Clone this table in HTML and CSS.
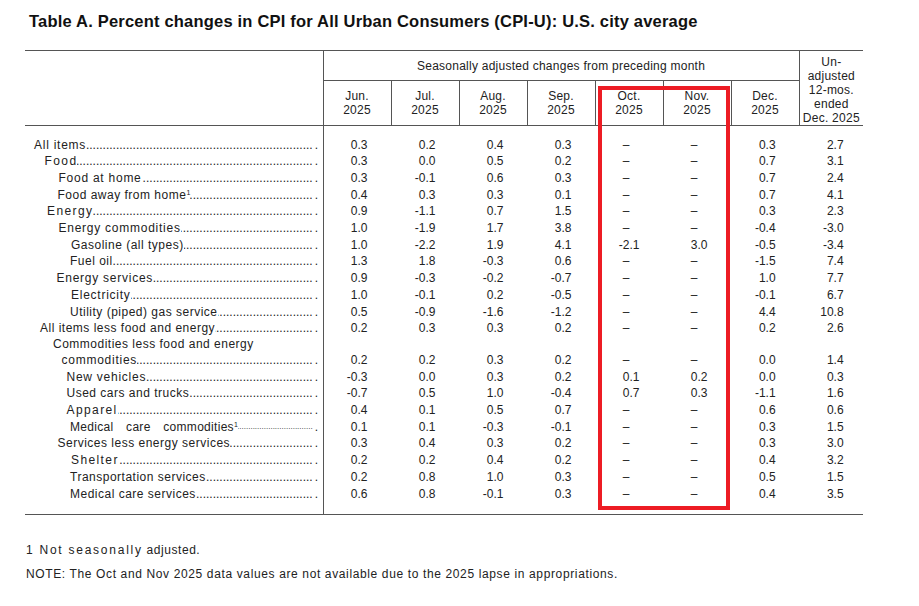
FILE: index.html
```html
<!DOCTYPE html>
<html lang="en">
<head>
<meta charset="utf-8">
<title>Table A. Percent changes in CPI</title>
<link rel="stylesheet" href="styles.css">
</head>
<body>
<div class="page">
  <h1 class="title">Table A. Percent changes in CPI for All Urban Consumers (CPI-U): U.S. city average</h1>
  <table class="cpi">
    <colgroup>
      <col class="c-label">
      <col class="c-m"><col class="c-m"><col class="c-m"><col class="c-m"><col class="c-m"><col class="c-m"><col class="c-m">
      <col class="c-u">
    </colgroup>
    <thead>
      <tr class="h1">
        <th class="blank" rowspan="2"></th>
        <th class="grp" colspan="7">Seasonally adjusted changes from preceding month</th>
        <th class="unadj" rowspan="2">Un-<br>adjusted<br>12-mos.<br>ended<br>Dec. 2025</th>
      </tr>
      <tr class="h2">
        <th class="m">Jun.<br>2025</th>
        <th class="m">Jul.<br>2025</th>
        <th class="m">Aug.<br>2025</th>
        <th class="m">Sep.<br>2025</th>
        <th class="m">Oct.<br>2025</th>
        <th class="m">Nov.<br>2025</th>
        <th class="m">Dec.<br>2025</th>
      </tr>
    </thead>
    <tbody>
      <tr class="first">
        <td class="lbl"><div class="lead ind-9 wide"><span class="t">All items</span><span class="dots"></span><span class="end">.</span></div></td>
        <td class="num">0.3</td><td class="num">0.2</td><td class="num">0.4</td><td class="num">0.3</td><td class="num"><span class="na">–</span></td><td class="num"><span class="na">–</span></td><td class="num">0.3</td><td class="num last">2.7</td>
      </tr>
      <tr>
        <td class="lbl"><div class="lead ind-20 wider"><span class="t">Food</span><span class="dots"></span><span class="end">.</span></div></td>
        <td class="num">0.3</td><td class="num">0.0</td><td class="num">0.5</td><td class="num">0.2</td><td class="num"><span class="na">–</span></td><td class="num"><span class="na">–</span></td><td class="num">0.7</td><td class="num last">3.1</td>
      </tr>
      <tr>
        <td class="lbl"><div class="lead ind-33 wide"><span class="t">Food at home</span><span class="dots"></span><span class="end">.</span></div></td>
        <td class="num">0.3</td><td class="num">-0.1</td><td class="num">0.6</td><td class="num">0.3</td><td class="num"><span class="na">–</span></td><td class="num"><span class="na">–</span></td><td class="num">0.7</td><td class="num last">2.4</td>
      </tr>
      <tr>
        <td class="lbl"><div class="lead ind-32"><span class="t">Food away from home<sup>1</sup></span><span class="dots"></span><span class="end">.</span></div></td>
        <td class="num">0.4</td><td class="num">0.3</td><td class="num">0.3</td><td class="num">0.1</td><td class="num"><span class="na">–</span></td><td class="num"><span class="na">–</span></td><td class="num">0.7</td><td class="num last">4.1</td>
      </tr>
      <tr>
        <td class="lbl"><div class="lead ind-22 wider"><span class="t">Energy</span><span class="dots"></span><span class="end">.</span></div></td>
        <td class="num">0.9</td><td class="num">-1.1</td><td class="num">0.7</td><td class="num">1.5</td><td class="num"><span class="na">–</span></td><td class="num"><span class="na">–</span></td><td class="num">0.3</td><td class="num last">2.3</td>
      </tr>
      <tr>
        <td class="lbl"><div class="lead ind-33 wide"><span class="t">Energy commodities</span><span class="dots"></span><span class="end">.</span></div></td>
        <td class="num">1.0</td><td class="num">-1.9</td><td class="num">1.7</td><td class="num">3.8</td><td class="num"><span class="na">–</span></td><td class="num"><span class="na">–</span></td><td class="num">-0.4</td><td class="num last">-3.0</td>
      </tr>
      <tr>
        <td class="lbl"><div class="lead ind-46"><span class="t">Gasoline (all types)</span><span class="dots"></span><span class="end">.</span></div></td>
        <td class="num">1.0</td><td class="num">-2.2</td><td class="num">1.9</td><td class="num">4.1</td><td class="num">-2.1</td><td class="num">3.0</td><td class="num">-0.5</td><td class="num last">-3.4</td>
      </tr>
      <tr>
        <td class="lbl"><div class="lead ind-45"><span class="t">Fuel oil</span><span class="dots"></span><span class="end">.</span></div></td>
        <td class="num">1.3</td><td class="num">1.8</td><td class="num">-0.3</td><td class="num">0.6</td><td class="num"><span class="na">–</span></td><td class="num"><span class="na">–</span></td><td class="num">-1.5</td><td class="num last">7.4</td>
      </tr>
      <tr>
        <td class="lbl"><div class="lead ind-31 wide"><span class="t">Energy services</span><span class="dots"></span><span class="end">.</span></div></td>
        <td class="num">0.9</td><td class="num">-0.3</td><td class="num">-0.2</td><td class="num">-0.7</td><td class="num"><span class="na">–</span></td><td class="num"><span class="na">–</span></td><td class="num">1.0</td><td class="num last">7.7</td>
      </tr>
      <tr>
        <td class="lbl"><div class="lead ind-46 wide"><span class="t">Electricity</span><span class="dots"></span><span class="end">.</span></div></td>
        <td class="num">1.0</td><td class="num">-0.1</td><td class="num">0.2</td><td class="num">-0.5</td><td class="num"><span class="na">–</span></td><td class="num"><span class="na">–</span></td><td class="num">-0.1</td><td class="num last">6.7</td>
      </tr>
      <tr>
        <td class="lbl"><div class="lead ind-45"><span class="t">Utility (piped) gas service</span><span class="dots"></span><span class="end">.</span></div></td>
        <td class="num">0.5</td><td class="num">-0.9</td><td class="num">-1.6</td><td class="num">-1.2</td><td class="num"><span class="na">–</span></td><td class="num"><span class="na">–</span></td><td class="num">4.4</td><td class="num last">10.8</td>
      </tr>
      <tr>
        <td class="lbl"><div class="lead ind-15"><span class="t">All items less food and energy</span><span class="dots"></span><span class="end">.</span></div></td>
        <td class="num">0.2</td><td class="num">0.3</td><td class="num">0.3</td><td class="num">0.2</td><td class="num"><span class="na">–</span></td><td class="num"><span class="na">–</span></td><td class="num">0.2</td><td class="num last">2.6</td>
      </tr>
      <tr>
        <td class="lbl">
          <div class="lead ind-28 upper"><span class="t">Commodities less food and energy</span></div>
          <div class="lead ind-36 wide"><span class="t">commodities</span><span class="dots"></span><span class="end">.</span></div>
        </td>
        <td class="num">0.2</td><td class="num">0.2</td><td class="num">0.3</td><td class="num">0.2</td><td class="num"><span class="na">–</span></td><td class="num"><span class="na">–</span></td><td class="num">0.0</td><td class="num last">1.4</td>
      </tr>
      <tr>
        <td class="lbl"><div class="lead ind-41 wide"><span class="t">New vehicles</span><span class="dots"></span><span class="end">.</span></div></td>
        <td class="num">-0.3</td><td class="num">0.0</td><td class="num">0.3</td><td class="num">0.2</td><td class="num">0.1</td><td class="num">0.2</td><td class="num">0.0</td><td class="num last">0.3</td>
      </tr>
      <tr>
        <td class="lbl"><div class="lead ind-41"><span class="t">Used cars and trucks</span><span class="dots"></span><span class="end">.</span></div></td>
        <td class="num">-0.7</td><td class="num">0.5</td><td class="num">1.0</td><td class="num">-0.4</td><td class="num">0.7</td><td class="num">0.3</td><td class="num">-1.1</td><td class="num last">1.6</td>
      </tr>
      <tr>
        <td class="lbl"><div class="lead ind-41 wider"><span class="t">Apparel</span><span class="dots"></span><span class="end">.</span></div></td>
        <td class="num">0.4</td><td class="num">0.1</td><td class="num">0.5</td><td class="num">0.7</td><td class="num"><span class="na">–</span></td><td class="num"><span class="na">–</span></td><td class="num">0.6</td><td class="num last">0.6</td>
      </tr>
      <tr>
        <td class="lbl"><div class="lead ind-45 gappy"><span class="t">Medical care commodities<sup>1</sup></span><span class="dots small"></span><span class="end">.</span></div></td>
        <td class="num">0.1</td><td class="num">0.1</td><td class="num">-0.3</td><td class="num">-0.1</td><td class="num"><span class="na">–</span></td><td class="num"><span class="na">–</span></td><td class="num">0.3</td><td class="num last">1.5</td>
      </tr>
      <tr>
        <td class="lbl"><div class="lead ind-32"><span class="t">Services less energy services</span><span class="dots"></span><span class="end">.</span></div></td>
        <td class="num">0.3</td><td class="num">0.4</td><td class="num">0.3</td><td class="num">0.2</td><td class="num"><span class="na">–</span></td><td class="num"><span class="na">–</span></td><td class="num">0.3</td><td class="num last">3.0</td>
      </tr>
      <tr>
        <td class="lbl"><div class="lead ind-46 wider"><span class="t">Shelter</span><span class="dots"></span><span class="end">.</span></div></td>
        <td class="num">0.2</td><td class="num">0.2</td><td class="num">0.4</td><td class="num">0.2</td><td class="num"><span class="na">–</span></td><td class="num"><span class="na">–</span></td><td class="num">0.4</td><td class="num last">3.2</td>
      </tr>
      <tr>
        <td class="lbl"><div class="lead ind-45"><span class="t">Transportation services</span><span class="dots"></span><span class="end">.</span></div></td>
        <td class="num">0.2</td><td class="num">0.8</td><td class="num">1.0</td><td class="num">0.3</td><td class="num"><span class="na">–</span></td><td class="num"><span class="na">–</span></td><td class="num">0.5</td><td class="num last">1.5</td>
      </tr>
      <tr class="end-row">
        <td class="lbl"><div class="lead ind-45"><span class="t">Medical care services</span><span class="dots"></span><span class="end">.</span></div></td>
        <td class="num">0.6</td><td class="num">0.8</td><td class="num">-0.1</td><td class="num">0.3</td><td class="num"><span class="na">–</span></td><td class="num"><span class="na">–</span></td><td class="num">0.4</td><td class="num last">3.5</td>
      </tr>
    </tbody>
  </table>
  <div class="flag" aria-hidden="true"></div>
  <div class="notes">
    <p class="fn1"><span class="spaced">1 Not seasonally</span> adjusted.</p>
    <p class="fn2">NOTE: The Oct and Nov 2025 data values are not available due to the 2025 lapse in appropriations.</p>
  </div>
</div>
</body>
</html>
```

FILE: styles.css
```css
* { box-sizing: border-box; }

body {
  margin: 0;
  background: #ffffff;
  font-family: "Liberation Sans", Arial, Helvetica, sans-serif;
  color: #222222;
}

.page {
  position: relative;
  width: 919px;
  height: 606px;
  overflow: hidden;
}

.title {
  margin: 0;
  padding: 11px 0 0 29px;
  font-size: 16.5px;
  line-height: 20px;
  letter-spacing: 0.2px;
  font-weight: bold;
  color: #111111;
}

/* ---------- table ---------- */
.cpi {
  margin: 19px 0 0 25px;
  width: 838px;
  border-collapse: collapse;
  table-layout: fixed;
  border-top: 1px solid #555555;
  border-bottom: 1px solid #555555;
}

col.c-label { width: 298px; }
col.c-m { width: 68px; }
col.c-u { width: 64px; }

.cpi th {
  padding: 0;
  font-weight: normal;
  font-size: 12px;
  letter-spacing: 0.25px;
  line-height: 14px;
  text-align: center;
  vertical-align: middle;
  color: #222222;
}

.h1 th { height: 30px; }
.h2 th { height: 45px; }

th.blank {
  border-right: 1px solid #555555;
  border-bottom: 1px solid #555555;
}

th.grp { border-bottom: 1px solid #555555; }

th.m {
  border-left: 1px solid #555555;
  border-bottom: 1px solid #555555;
}

th.unadj {
  border-left: 1px solid #555555;
  border-bottom: 1px solid #555555;
  padding-top: 3px;
}

.cpi td {
  padding: 0;
  font-size: 12px;
  line-height: 16.7px;
  white-space: nowrap;
}

td.lbl {
  border-right: 1px solid #555555;
  padding-right: 4.5px;
  vertical-align: bottom;
}

td.num {
  text-align: right;
  padding-right: 23.5px;
  vertical-align: bottom;
}

td.last { padding-right: 19.5px; }

tr.first td { padding-top: 10.5px; }
tr.end-row td { padding-bottom: 12px; }

.na {
  display: inline-block;
  width: 1.39em;
  text-align: left;
}

/* ---------- leader dots ---------- */
.lead {
  display: flex;
  white-space: nowrap;
  letter-spacing: 0.5px;
}

.lead.upper { line-height: 15px; }

.lead .t { flex: none; }

.lead .dots {
  flex: 1 1 0;
  min-width: 0;
  overflow: hidden;
  direction: rtl;
  letter-spacing: 0;
}

.lead .dots::before {
  content: "........................................................................................................................................................";
}

.lead .dots.small { font-size: 8px; letter-spacing: 0; }

.lead .end {
  flex: none;
  letter-spacing: 0;
  padding-left: 2px;
}

.lead.wide { letter-spacing: 0.75px; }
.lead.wider { letter-spacing: 1.4px; }
.lead.gappy { word-spacing: 9px; letter-spacing: 0.3px; }

.lead sup {
  font-size: 7px;
  line-height: 0;
  vertical-align: 4px;
  letter-spacing: 0;
}

.ind-9 { padding-left: 9px; }
.ind-15 { padding-left: 15px; }
.ind-20 { padding-left: 19.5px; }
.ind-22 { padding-left: 22px; }
.ind-28 { padding-left: 28px; }
.ind-31 { padding-left: 31.5px; }
.ind-32 { padding-left: 32.5px; }
.ind-33 { padding-left: 33.5px; }
.ind-36 { padding-left: 36.5px; }
.ind-41 { padding-left: 41.5px; }
.ind-45 { padding-left: 45px; }
.ind-46 { padding-left: 46px; }

/* ---------- highlight box ---------- */
.flag {
  position: absolute;
  left: 598px;
  top: 86px;
  width: 131.5px;
  height: 424px;
  border: 4.3px solid #ed1c24;
}

/* ---------- notes ---------- */
.notes {
  padding-left: 26px;
  font-size: 12px;
  line-height: 16px;
  color: #222222;
}

.notes p { margin: 0; }

.fn1 {
  margin-top: 27px !important;
  letter-spacing: 0.55px;
}

.fn1 .spaced { letter-spacing: 1.75px; }

.fn2 {
  margin-top: 7.5px !important;
  letter-spacing: 0.63px;
}
```
